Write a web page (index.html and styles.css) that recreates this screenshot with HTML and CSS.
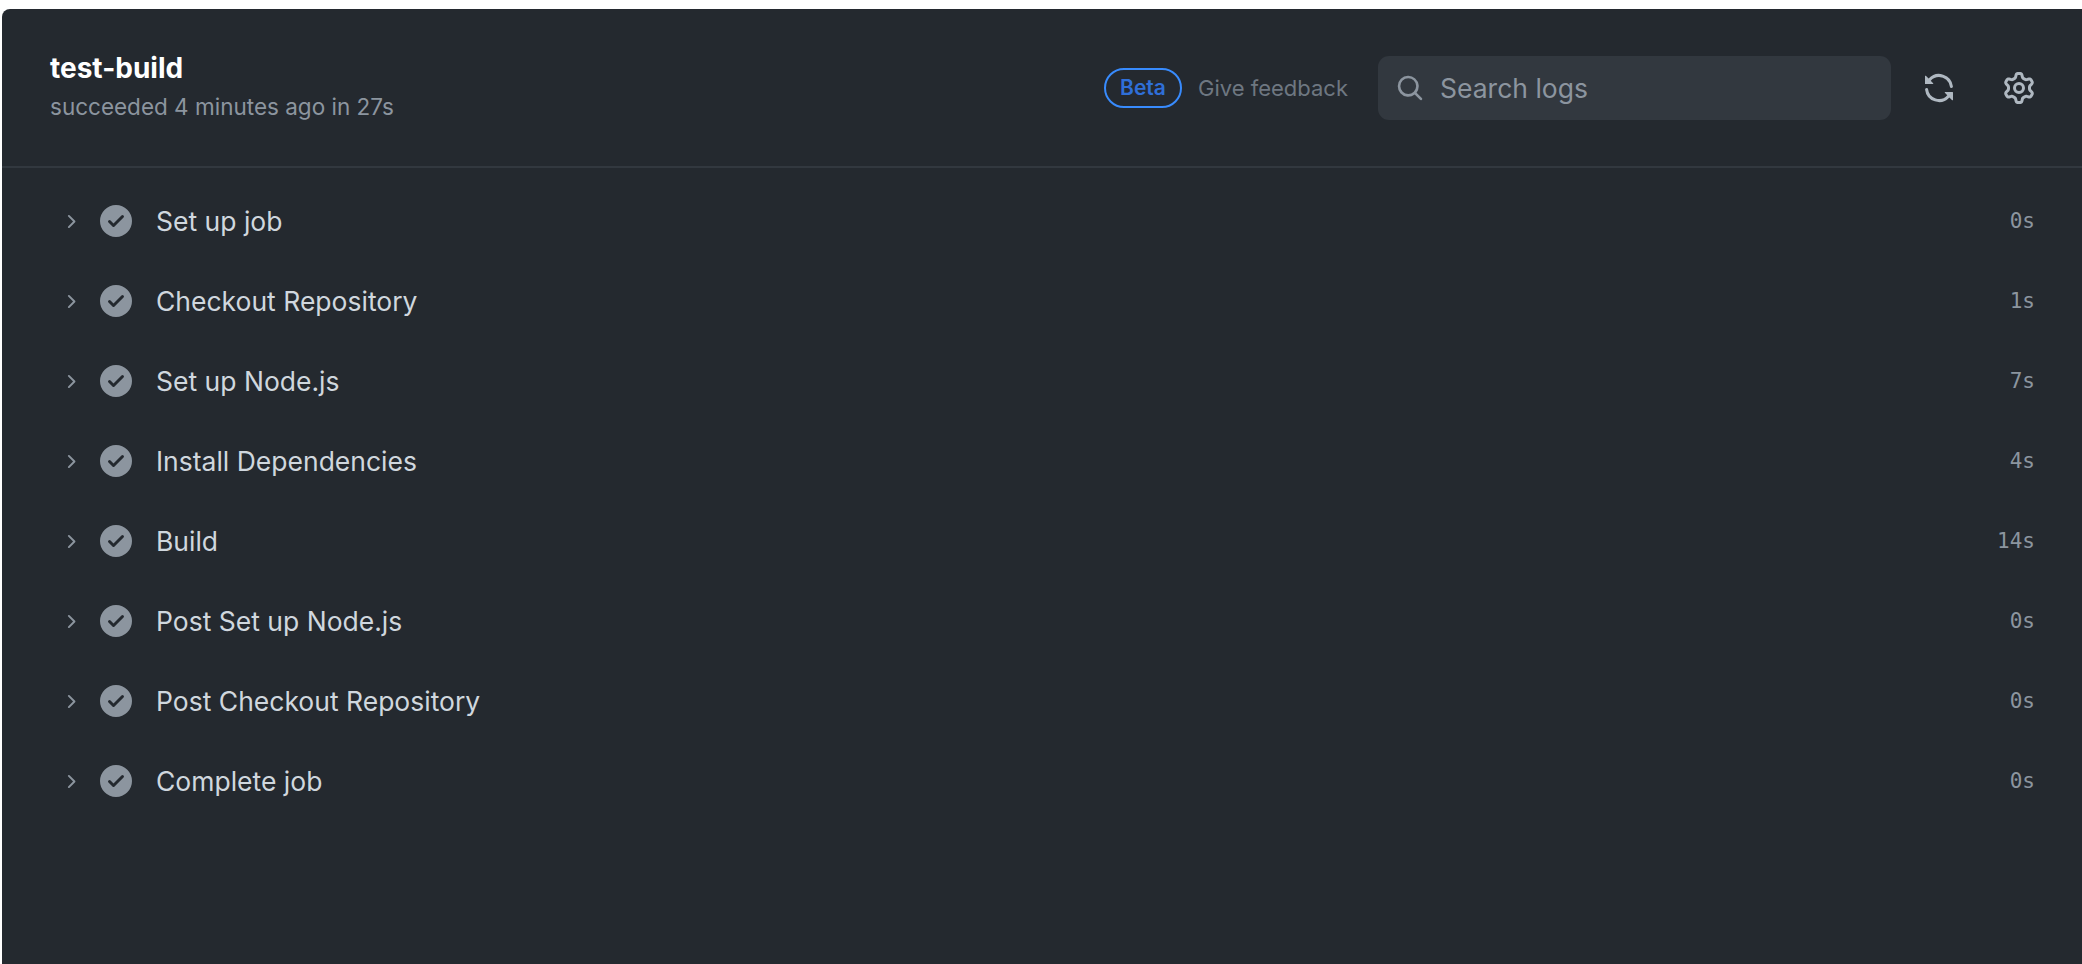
FILE: index.html
```html
<!DOCTYPE html>
<html lang="en">
<head>
    <meta charset="UTF-8">
    <meta name="viewport" content="width=device-width, initial-scale=1.0">
    <title>test-build</title>
    <link rel="stylesheet" href="styles.css">
</head>
<body>
    <div class="panel">
        <header class="panel-header">
            <div class="job-info">
                <h1>test-build</h1>
                <p>succeeded 4 minutes ago in 27s</p>
            </div>
            <div class="job-actions">
                <span class="beta-badge">Beta</span>
                <a class="feedback" href="#">Give feedback</a>
                <div class="search-box">
                    <svg class="search-icon" viewBox="0 0 16 16"><path d="M10.68 11.74a6 6 0 0 1-7.922-8.982 6 6 0 0 1 8.982 7.922l3.04 3.04a.749.749 0 0 1-.326 1.275.749.749 0 0 1-.734-.215ZM11.5 7a4.499 4.499 0 1 0-8.997 0A4.499 4.499 0 0 0 11.5 7Z"/></svg>
                    <span>Search logs</span>
                </div>
                <svg class="tool-icon sync-icon" viewBox="0 0 16 16"><path d="M1.705 8.005a.75.75 0 0 1 .834.656 5.5 5.5 0 0 0 9.592 2.97l-1.204-1.204a.25.25 0 0 1 .177-.427h3.646a.25.25 0 0 1 .25.25v3.646a.25.25 0 0 1-.427.177l-1.38-1.38A7.002 7.002 0 0 1 1.05 8.84a.75.75 0 0 1 .656-.834ZM8 2.5a5.487 5.487 0 0 0-4.131 1.869l1.204 1.204A.25.25 0 0 1 4.896 6H1.25A.25.25 0 0 1 1 5.75V2.104a.25.25 0 0 1 .427-.177l1.38 1.38A7.002 7.002 0 0 1 14.95 7.16a.75.75 0 0 1-1.49.178A5.5 5.5 0 0 0 8 2.5Z"/></svg>
                <svg class="tool-icon gear-icon" viewBox="0 0 16 16"><path d="M8 0a8.2 8.2 0 0 1 .701.031C9.444.095 9.99.645 10.16 1.29l.288 1.107c.018.066.079.158.212.224.231.114.454.243.668.386.123.082.233.09.299.071l1.103-.303c.644-.176 1.392.021 1.82.63.27.385.506.792.704 1.218.315.675.111 1.422-.364 1.891l-.814.806c-.049.048-.098.147-.088.294.016.257.016.515 0 .772-.01.147.038.246.088.294l.814.806c.475.469.679 1.216.364 1.891a7.977 7.977 0 0 1-.704 1.217c-.428.61-1.176.807-1.82.63l-1.102-.302c-.067-.019-.177-.011-.3.071a5.909 5.909 0 0 1-.668.386c-.133.066-.194.158-.211.224l-.29 1.106c-.168.646-.715 1.196-1.458 1.26a8.006 8.006 0 0 1-1.402 0c-.743-.064-1.289-.614-1.458-1.26l-.289-1.106c-.018-.066-.079-.158-.212-.224a5.738 5.738 0 0 1-.668-.386c-.123-.082-.233-.09-.299-.071l-1.103.303c-.644.176-1.392-.021-1.82-.63a8.12 8.12 0 0 1-.704-1.218c-.315-.675-.111-1.422.363-1.891l.815-.806c.05-.048.098-.147.088-.294a6.214 6.214 0 0 1 0-.772c.01-.147-.038-.246-.088-.294l-.815-.806C.635 6.045.431 5.298.746 4.623a7.92 7.92 0 0 1 .704-1.217c.428-.61 1.176-.807 1.82-.63l1.102.302c.067.019.177.011.3-.071.214-.143.437-.272.668-.386.133-.066.194-.158.211-.224l.29-1.106C6.009.645 6.556.095 7.299.03 7.53.01 7.764 0 8 0Zm-.571 1.525c-.036.003-.108.036-.137.146l-.289 1.105c-.147.561-.549.967-.998 1.189-.173.086-.34.183-.5.29-.417.278-.97.423-1.529.27l-1.103-.303c-.109-.03-.175.016-.195.045-.22.312-.412.644-.573.99-.014.031-.021.11.059.19l.815.806c.411.406.562.957.53 1.456a4.709 4.709 0 0 0 0 .582c.032.499-.119 1.05-.53 1.456l-.815.806c-.081.08-.073.159-.059.19.162.346.353.677.573.989.02.03.085.076.195.046l1.102-.303c.56-.153 1.113-.008 1.53.27.161.107.328.204.501.29.447.222.85.629.997 1.189l.289 1.105c.029.109.101.143.137.146a6.6 6.6 0 0 0 1.142 0c.036-.003.108-.036.137-.146l.289-1.105c.147-.561.549-.967.998-1.189.173-.086.34-.183.5-.29.417-.278.97-.423 1.529-.27l1.103.303c.109.029.175-.016.195-.045.22-.313.411-.644.573-.99.014-.031.021-.11-.059-.19l-.815-.806c-.411-.406-.562-.957-.53-1.456a4.709 4.709 0 0 0 0-.582c-.032-.499.119-1.05.53-1.456l.815-.806c.081-.08.073-.159.059-.19a6.464 6.464 0 0 0-.573-.989c-.02-.03-.085-.076-.195-.046l-1.102.303c-.56.153-1.113.008-1.53-.27a4.44 4.44 0 0 0-.501-.29c-.447-.222-.85-.629-.997-1.189l-.289-1.105c-.029-.11-.101-.143-.137-.146a6.6 6.6 0 0 0-1.142 0ZM11 8a3 3 0 1 1-6 0 3 3 0 0 1 6 0ZM9.5 8a1.5 1.5 0 1 0-3.001.001A1.5 1.5 0 0 0 9.5 8Z"/></svg>
            </div>
        </header>
        <div class="steps" id="steps"></div>
    </div>
    <script src="steps.js"></script>
</body>
</html>
```

FILE: styles.css
```css
* {
    box-sizing: border-box;
}
html, body {
    height: 100%;
}
body {
    margin: 0;
    padding: 9px 0 0 2px;
    background-color: white;
    font-family: Inter, "Noto Sans", sans-serif;
    overflow: hidden;
}
.panel {
    height: 100%;
    background-color: #24292f;
    border-radius: 8px 0 0 0;
}
.panel-header {
    height: 159px;
    padding: 0 47px 0 48px;
    display: flex;
    align-items: center;
    justify-content: space-between;
    border-bottom: 2px solid #32383f;
}
.job-info {
    margin-top: -3px;
}
h1 {
    margin: 0;
    font-size: 28px;
    line-height: 36px;
    font-weight: 700;
    color: white;
}
.job-info p {
    margin: 6px 0 0;
    font-size: 22.5px;
    line-height: 30px;
    color: #8c959f;
}
.job-actions {
    display: flex;
    align-items: center;
}
.beta-badge {
    width: 78px;
    height: 40px;
    margin-right: 16px;
    display: flex;
    align-items: center;
    justify-content: center;
    border: 2px solid #388bfd;
    border-radius: 20px;
    font-size: 21px;
    font-weight: 600;
    color: #2f6fd8;
}
.feedback {
    width: 180px;
    font-size: 22px;
    color: #6e7781;
    text-decoration: none;
}
.search-box {
    width: 513px;
    height: 64px;
    padding-left: 18px;
    display: flex;
    align-items: center;
    gap: 16px;
    background-color: #32383f;
    border-radius: 11px;
    font-size: 26.5px;
    color: #8c959f;
}
.search-icon {
    width: 28px;
    height: 28px;
    fill: #8c959f;
}
.tool-icon {
    width: 32px;
    height: 32px;
    fill: #afb8c1;
}
.sync-icon {
    margin-left: 32px;
}
.gear-icon {
    margin-left: 48px;
}
.steps {
    padding-top: 13px;
}
.step {
    height: 80px;
    padding: 0 47px 0 58px;
    display: flex;
    align-items: center;
}
.step-chevron {
    width: 21px;
    height: 21px;
    fill: #8c959f;
}
.step-check {
    width: 32px;
    height: 32px;
    margin-left: 19px;
    fill: #8c959f;
}
.step-name {
    margin-left: 24px;
    flex: 1;
    font-size: 26.5px;
    color: #d0d7de;
}
.step-time {
    font-family: "DejaVu Sans Mono", monospace;
    font-size: 21px;
    color: #8c959f;
}
```

FILE: steps.js
```js
const steps = [
    ['Set up job', '0s'],
    ['Checkout Repository', '1s'],
    ['Set up Node.js', '7s'],
    ['Install Dependencies', '4s'],
    ['Build', '14s'],
    ['Post Set up Node.js', '0s'],
    ['Post Checkout Repository', '0s'],
    ['Complete job', '0s']
];

const chevron = 'M6.22 3.22a.749.749 0 0 1 1.06 0l4.25 4.25a.749.749 0 0 1 0 1.06l-4.25 4.25a.749.749 0 0 1-1.275-.326.749.749 0 0 1 .215-.734L9.94 8 6.22 4.28a.75.75 0 0 1 0-1.06Z';
const check = 'M8 16A8 8 0 1 1 8 0a8 8 0 0 1 0 16Zm3.78-9.72a.751.751 0 0 0-.018-1.042.751.751 0 0 0-1.042-.018L6.75 9.19 5.28 7.72a.751.751 0 0 0-1.042.018.751.751 0 0 0-.018 1.042l2 2a.75.75 0 0 0 1.06 0Z';

document.getElementById('steps').innerHTML = steps.map(([name, time]) => `
    <div class="step">
        <svg class="step-chevron" viewBox="0 0 16 16"><path d="${chevron}"/></svg>
        <svg class="step-check" viewBox="0 0 16 16"><path d="${check}"/></svg>
        <span class="step-name">${name}</span>
        <span class="step-time">${time}</span>
    </div>`).join('');
```
